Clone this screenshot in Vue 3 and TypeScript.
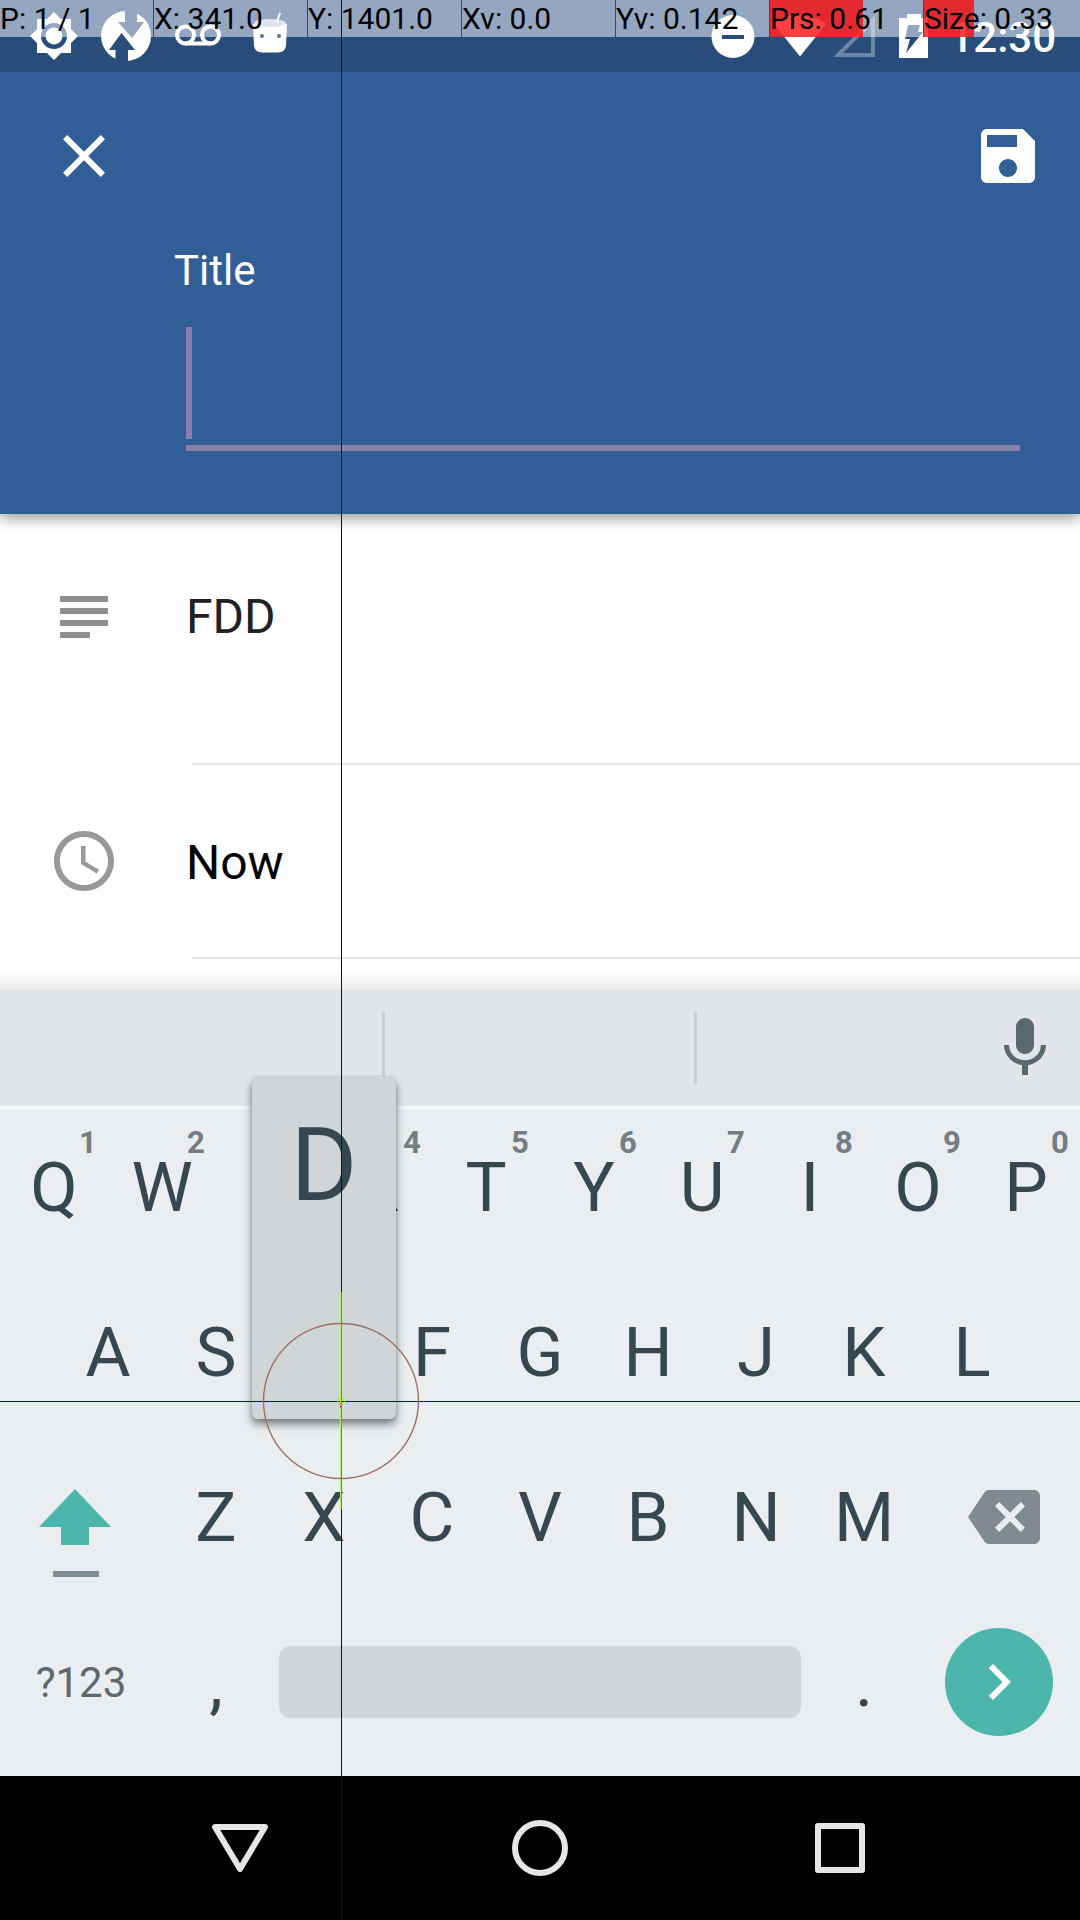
<script setup lang="ts">
import { ref } from 'vue'

interface Readout {
  label: string
  level?: number
}

interface Key {
  letter: string
  hint?: string
}

const readouts: Readout[] = [
  { label: 'P: 1 / 1' },
  { label: 'X: 341.0' },
  { label: 'Y: 1401.0' },
  { label: 'Xv: 0.0' },
  { label: 'Yv: 0.142' },
  { label: 'Prs: 0.61', level: 0.61 },
  { label: 'Size: 0.33', level: 0.33 },
]

const pointer = { x: 341, y: 1401 }

const topRow: Key[] = [...'QWERTYUIOP'].map((letter, i) => ({ letter, hint: String((i + 1) % 10) }))
const homeRow: Key[] = [...'ASDFGHJKL'].map((letter) => ({ letter }))
const bottomRow: Key[] = [...'ZXCVBNM'].map((letter) => ({ letter }))
const pressed = 'D'

const title = ref('')
const description = ref('FDD')
</script>

<template>
  <div class="screen">
    <header class="header">
      <div class="status">
        <div class="status-left">
          <svg class="slot" viewBox="0 0 72 72" fill="#fff">
            <path fill-rule="evenodd" d="M53 29V19H43L36 12L29 19H19V29L12 36L19 43V53H29L36 60L43 53H53V43L60 36ZM36 23A13 13 0 1 1 36 49A13 13 0 1 1 36 23Z" />
            <circle cx="36" cy="36" r="8.5" />
          </svg>
          <svg class="slot" viewBox="0 0 72 72">
            <circle cx="36" cy="36" r="25" fill="#fff" />
            <path class="cut-light" d="M35 10H47V22H54L42 38L28 22H35Z" />
            <path class="cut-dark" d="M31.500 33L45 50H38V62H25.500V50H19Z" />
          </svg>
          <svg class="slot" viewBox="0 0 72 72" fill="none" stroke="#fff" stroke-width="4">
            <circle cx="23.500" cy="35" r="8.500" />
            <circle cx="48.500" cy="35" r="8.500" />
            <path d="M23 43.500H49" />
          </svg>
          <svg class="slot" viewBox="0 0 72 72">
            <path d="M19 24H53L52 46Q51 52 44 52.500H28Q21 52 20 46Z" fill="#fff" />
            <ellipse cx="36" cy="23" rx="16" ry="4" fill="#dfe4ec" />
            <path d="M43 22L46 13" stroke="#fff" stroke-width="2" />
            <circle cx="28" cy="36" r="2" fill="#5b789c" />
            <circle cx="45" cy="36" r="2" fill="#5b789c" />
          </svg>
        </div>
        <div class="status-right">
          <svg class="dnd" viewBox="0 0 44 72">
            <circle cx="22" cy="36.500" r="21.500" fill="#fff" />
            <rect x="11" y="35" width="22" height="4" fill="#294d7b" />
          </svg>
          <svg class="wifi" viewBox="0 0 54 72" fill="#fff">
            <path d="M27 56.500L53 24C52 23 42 15 27 15S2 23 1 24Z" />
          </svg>
          <svg class="signal" viewBox="0 0 42 72" fill="none" stroke="#fff" stroke-opacity=".32" stroke-width="4">
            <path d="M5 55H40V20Z" />
          </svg>
          <svg class="battery" viewBox="0 0 30 72" fill="#fff">
            <path fill-rule="evenodd" d="M8 14H22V18H29V58H0V18H8ZM9 25L6 39H11L7 53L24 32H19L21 25Z" />
          </svg>
          <span class="clock">12:30</span>
        </div>
      </div>

      <div class="toolbar">
        <button class="icon-button" type="button" aria-label="Close">
          <svg viewBox="0 0 24 24" fill="#fff"><path d="M19 6.410L17.590 5 12 10.590 6.410 5 5 6.410 10.590 12 5 17.590 6.410 19 12 13.410 17.590 19 19 17.590 13.410 12z" /></svg>
        </button>
        <button class="icon-button" type="button" aria-label="Save">
          <svg viewBox="0 0 24 24" fill="#fff"><path d="M17 3H5c-1.110 0-2 .9-2 2v14c0 1.100.89 2 2 2h14c1.100 0 2-.9 2-2V7l-4-4zm-5 16c-1.660 0-3-1.340-3-3s1.340-3 3-3 3 1.340 3 3-1.340 3-3 3zm3-10H5V5h10v4z" /></svg>
        </button>
      </div>

      <div class="title-field">
        <label for="title">Title</label>
        <div class="title-box">
          <input id="title" v-model="title" type="text" />
          <span class="caret"></span>
        </div>
      </div>
    </header>

    <main class="content">
      <div class="row row-tall">
        <svg class="row-icon" viewBox="0 0 24 24" fill="#8f8f8f"><path d="M14 17H4v2h10v-2zm6-8H4v2h16V9zm0 4H4v2h16v-2zM4 5v2h16V5H4z" /></svg>
        <input v-model="description" class="row-text description" type="text" aria-label="Description" />
      </div>
      <div class="row">
        <svg class="row-icon" viewBox="0 0 24 24" fill="#999"><path d="M11.990 2C6.470 2 2 6.480 2 12s4.470 10 9.990 10C17.520 22 22 17.520 22 12S17.520 2 11.990 2zM12 20c-4.420 0-8-3.580-8-8s3.580-8 8-8 8 3.580 8 8-3.580 8-8 8zm.5-13H11v6l5.250 3.150.75-1.230-4.500-2.670z" /></svg>
        <button class="row-text now" type="button">Now</button>
      </div>
      <div class="edge"></div>
    </main>

    <section class="keyboard" aria-label="Keyboard">
      <div class="suggestions">
        <span class="slot-a"></span>
        <span class="slot-b"></span>
        <button class="icon-button mic" type="button" aria-label="Voice input">
          <svg viewBox="0 0 24 24" fill="#5b686e"><path d="M12 14c1.660 0 2.990-1.340 2.990-3L15 5c0-1.660-1.340-3-3-3S9 3.340 9 5v6c0 1.660 1.340 3 3 3zm5.300-3c0 3-2.540 5.100-5.300 5.100S6.700 14 6.700 11H5c0 3.410 2.720 6.230 6 6.720V21h2v-3.280c3.280-.48 6-3.300 6-6.720h-1.700z" /></svg>
        </button>
      </div>

      <div class="keys">
        <div class="key-row">
          <button v-for="key in topRow" :key="key.letter" class="key glyph" type="button">
            {{ key.letter }}<span class="hint">{{ key.hint }}</span>
          </button>
        </div>
        <div class="key-row home">
          <button v-for="key in homeRow" :key="key.letter" class="key glyph" type="button">
            <span v-if="key.letter === pressed" class="preview">{{ key.letter }}</span>
            <template v-else>{{ key.letter }}</template>
          </button>
        </div>
        <div class="key-row">
          <button class="key wide" type="button" aria-label="Shift">
            <svg class="shift" viewBox="0 0 72 90">
              <path d="M36 0L72 38H50V56H22V38H0Z" fill="#4db6ac" />
              <rect x="14" y="82" width="46" height="6" fill="#818c92" />
            </svg>
          </button>
          <button v-for="key in bottomRow" :key="key.letter" class="key glyph" type="button">{{ key.letter }}</button>
          <button class="key wide backspace" type="button" aria-label="Backspace">
            <svg viewBox="0 0 24 24" fill="#808b8f"><path d="M22 3H7c-.69 0-1.230.35-1.590.88L0 12l5.410 8.110c.36.53.9.89 1.590.89h15c1.100 0 2-.9 2-2V5c0-1.100-.9-2-2-2zm-3 12.590L17.590 17 14 13.410 10.410 17 9 15.590 12.590 12 9 8.410 10.410 7 14 10.590 17.590 7 19 8.410 15.410 12 19 15.590z" /></svg>
          </button>
        </div>
        <div class="key-row">
          <button class="key wide glyph symbols" type="button">?123</button>
          <button class="key glyph" type="button">,</button>
          <button class="key space" type="button" aria-label="Space"><span></span></button>
          <button class="key glyph" type="button">.</button>
          <button class="key wide next" type="button" aria-label="Next">
            <span><svg viewBox="0 0 24 24" fill="#fff"><path d="M10 6L8.590 7.410 13.170 12l-4.580 4.590L10 18l6-6z" /></svg></span>
          </button>
        </div>
      </div>
    </section>

    <nav class="nav" aria-label="System">
      <button type="button" aria-label="Back">
        <svg viewBox="0 0 60 60"><path d="M5 9H55L30 51Z" /></svg>
      </button>
      <button type="button" aria-label="Home">
        <svg viewBox="0 0 60 60"><circle cx="30" cy="30" r="25" /></svg>
      </button>
      <button type="button" aria-label="Recent apps">
        <svg viewBox="0 0 60 60"><rect x="8" y="8" width="44" height="44" /></svg>
      </button>
    </nav>

    <div class="readouts">
      <div v-for="item in readouts" :key="item.label" class="readout">
        <span v-if="item.level" class="level" :style="{ width: `${item.level * 100}%` }"></span>
        <span class="readout-label">{{ item.label }}</span>
      </div>
    </div>

    <div class="cross-v" :style="{ left: `${pointer.x}px` }"></div>
    <div class="cross-h" :style="{ top: `${pointer.y}px` }"></div>
    <svg class="touch" viewBox="-80 -110 160 220" :style="{ left: `${pointer.x}px`, top: `${pointer.y}px` }">
      <path d="M-.5 -109V109" stroke="#b5f55c" />
      <path d="M.5 -109V109" stroke="#55963a" />
      <circle r="77.500" stroke="#a0705e" stroke-width="1.400" />
      <circle r="3.500" stroke="#a4f00c" />
      <path d="M-.5 2V7" stroke="#c87818" />
    </svg>
  </div>
</template>

<style>
body {
  margin: 0;
}
</style>

<style scoped>
.screen {
  position: relative;
  display: flex;
  flex-direction: column;
  min-height: 100vh;
  overflow: hidden;
  background: #fff;
  color: #37474f;
  font-family: Roboto, "Noto Sans", sans-serif;
}

button,
input {
  box-sizing: border-box;
  margin: 0;
  padding: 0;
  border: 0;
  border-radius: 0;
  outline: 0;
  background: none;
  color: inherit;
  font-family: inherit;
}

svg {
  display: block;
}

.header {
  position: relative;
  z-index: 1;
  padding-bottom: 63px;
  background: #315e97;
  box-shadow: 0 4px 14px rgba(0, 0, 0, 0.42);
}

.status {
  display: flex;
  justify-content: space-between;
  height: 72px;
  padding: 0 24px 0 18px;
  background: linear-gradient(#95a7c0 37px, #294d7b 37px);
}

.status-left,
.status-right {
  display: flex;
}

.status svg {
  height: 72px;
}

.slot {
  width: 72px;
}

.cut-light {
  fill: #95a7c0;
}

.cut-dark {
  fill: #294d7b;
}

.dnd {
  width: 44px;
  margin-right: 18px;
}

.wifi {
  width: 54px;
  margin-right: 6px;
}

.signal {
  width: 42px;
  margin-right: 24px;
}

.battery {
  width: 30px;
  margin-right: 20px;
}

.clock {
  color: #fff;
  font-size: 42px;
  font-weight: 500;
  line-height: 76px;
}

.toolbar {
  display: flex;
  align-items: center;
  justify-content: space-between;
  height: 168px;
  padding: 0 36px 0 48px;
}

.icon-button,
.icon-button svg {
  width: 72px;
  height: 72px;
}

.title-field {
  display: flex;
  flex-direction: column;
  padding: 6px 60px 0 174px;
}

.title-field label {
  color: #fff;
  font-size: 42px;
  line-height: 50px;
}

.title-box {
  position: relative;
  margin: 31px 0 0 12px;
}

.title-box input {
  display: block;
  width: 100%;
  height: 124px;
  border-bottom: 6px solid #8b7eac;
  color: #fff;
  font-size: 96px;
}

.caret {
  position: absolute;
  top: 0;
  left: 0;
  width: 6px;
  height: 112px;
  background: #8b7eac;
}

.content {
  display: flex;
  flex: 1;
  flex-direction: column;
}

.row {
  display: flex;
  gap: 66px;
  padding: 60px 0 62px 48px;
  background: linear-gradient(#e4e4e4, #e4e4e4) 192px 100% / 100% 2px no-repeat;
}

.row-tall {
  padding-top: 67px;
  padding-bottom: 112px;
}

.row-icon {
  flex: none;
  width: 72px;
  height: 72px;
}

.row-text {
  flex: 1;
  min-width: 0;
  height: 72px;
  color: #212121;
  font-size: 48px;
  text-align: left;
}

.description {
  padding-bottom: 2px;
}

.now {
  padding-top: 3px;
  color: #000;
}

.edge {
  height: 30px;
  margin-top: auto;
  background: linear-gradient(#fff 30%, #f5f5f5 78%, #eee 84%);
}

.suggestions {
  display: flex;
  align-items: center;
  height: 117px;
  border-bottom: 3px solid #f5f7f8;
  background: #e2e6e9;
}

.slot-a,
.slot-b {
  box-sizing: border-box;
  height: 72px;
  border-right: 3px solid #cacfd2;
}

.slot-a {
  width: 385px;
}

.slot-b {
  width: 312px;
}

.mic {
  margin: 0 19px 0 auto;
}

.keys {
  display: flex;
  flex-direction: column;
  gap: 10px;
  padding-bottom: 17px;
  background: #ebeef1;
}

.key-row {
  display: flex;
  height: 155px;
}

.home {
  padding: 0 5%;
}

.key {
  position: relative;
  display: flex;
  flex: 108 1 0;
  align-items: center;
  justify-content: center;
  min-width: 0;
  font-size: 69px;
  line-height: 80px;
}

.glyph {
  padding-top: 3px;
}

.wide {
  flex-grow: 162;
}

.hint {
  position: absolute;
  top: 16px;
  left: 50%;
  width: 68px;
  color: #727d84;
  font-size: 31px;
  font-weight: 700;
  line-height: 36px;
  text-align: center;
}

.preview {
  position: absolute;
  z-index: 2;
  top: -197px;
  right: -18px;
  bottom: 10px;
  left: -18px;
  box-sizing: border-box;
  padding-top: 28px;
  border-radius: 6px;
  background: #d0d5d8;
  box-shadow: 0 5px 9px rgba(0, 0, 0, 0.5), 0 0 2px rgba(0, 0, 0, 0.15);
  font-size: 102px;
  line-height: 120px;
}

.shift {
  width: 72px;
  height: 90px;
  margin: 34px 12px 0 0;
}

.backspace svg {
  width: 72px;
  height: 72px;
  margin-left: 10px;
}

.symbols {
  color: #5b686e;
  font-size: 42px;
}

.space {
  flex-grow: 540;
}

.space span {
  width: 522px;
  max-width: 100%;
  height: 72px;
  border-radius: 12px;
  background: #d0d5d8;
}

.next span {
  display: flex;
  align-items: center;
  justify-content: center;
  flex: none;
  width: 108px;
  height: 108px;
  border-radius: 50%;
  background: #4db6ac;
}

.next svg {
  width: 72px;
  height: 72px;
}

.nav {
  display: grid;
  grid-template-columns: repeat(3, 1fr);
  height: 144px;
  padding: 0 90px;
  background: #000;
}

.nav button {
  display: flex;
  align-items: center;
  justify-content: center;
}

.nav svg {
  width: 60px;
  height: 60px;
  fill: none;
  stroke: #e6e6e6;
  stroke-linejoin: round;
  stroke-width: 6;
}

.readouts {
  position: absolute;
  z-index: 4;
  top: 0;
  right: 0;
  left: 0;
  display: flex;
  gap: 1px;
  height: 37px;
}

.readout {
  position: relative;
  flex: 0 1 153px;
  min-width: 0;
  color: #000;
  box-shadow: 1px 0 #294d7b;
}

.readout:last-child {
  box-shadow: none;
}

.level {
  position: absolute;
  top: 0;
  left: 0;
  height: 37px;
  background: rgba(255, 0, 0, 0.75);
}

.readout-label {
  position: relative;
  display: block;
  font-size: 30px;
  line-height: 37px;
  white-space: nowrap;
}

.cross-v,
.cross-h {
  position: absolute;
  z-index: 3;
  background: #0000b4;
}

.cross-v {
  top: 0;
  bottom: 0;
  width: 1px;
}

.cross-h {
  right: 0;
  left: 0;
  height: 1px;
}

.touch {
  position: absolute;
  z-index: 4;
  width: 160px;
  height: 220px;
  margin: -110px 0 0 -80px;
  fill: none;
}
</style>
